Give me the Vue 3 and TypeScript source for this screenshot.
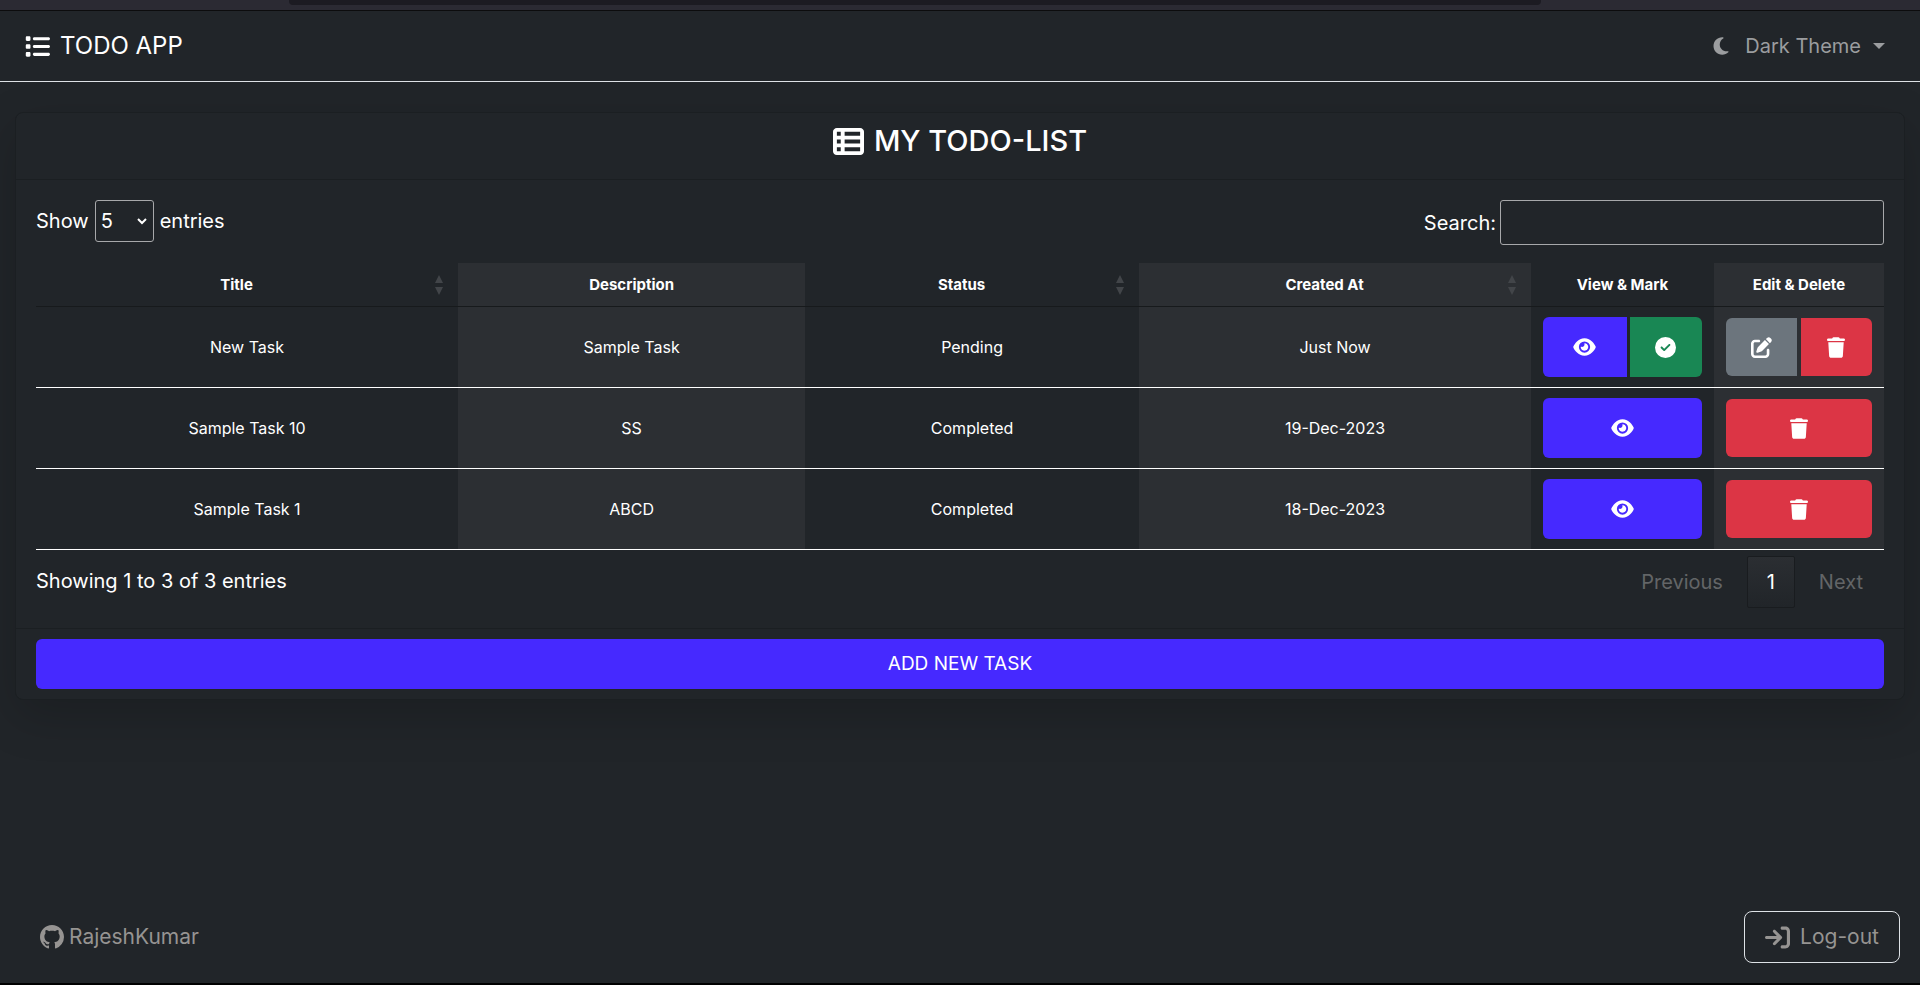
<script setup lang="ts">
import { computed, ref } from 'vue'

interface Task {
  id: number
  title: string
  description: string
  status: 'Pending' | 'Completed'
  createdAt: string
}

type SortKey = 'title' | 'status' | 'createdAt'

interface Column {
  label: string
  key?: SortKey
}

const columns: Column[] = [
  { label: 'Title', key: 'title' },
  { label: 'Description' },
  { label: 'Status', key: 'status' },
  { label: 'Created At', key: 'createdAt' },
  { label: 'View & Mark' },
  { label: 'Edit & Delete' },
]

const tasks = ref<Task[]>([
  { id: 3, title: 'New Task', description: 'Sample Task', status: 'Pending', createdAt: 'Just Now' },
  { id: 2, title: 'Sample Task 10', description: 'SS', status: 'Completed', createdAt: '19-Dec-2023' },
  { id: 1, title: 'Sample Task 1', description: 'ABCD', status: 'Completed', createdAt: '18-Dec-2023' },
])

const pageSize = ref(5)
const search = ref('')
const sortKey = ref<SortKey | null>(null)

const visibleTasks = computed(() => {
  const term = search.value.trim().toLowerCase()
  const found = tasks.value.filter((t) => `${t.title} ${t.description} ${t.status}`.toLowerCase().includes(term))
  const key = sortKey.value
  if (key) found.sort((a, b) => a[key].localeCompare(b[key]))
  return found.slice(0, pageSize.value)
})

const summary = computed(() => {
  const n = visibleTasks.value.length
  return `Showing ${n ? 1 : 0} to ${n} of ${tasks.value.length} entries`
})

function complete(task: Task) {
  task.status = 'Completed'
}

function remove(id: number) {
  tasks.value = tasks.value.filter((t) => t.id !== id)
}
</script>

<template>
  <div class="page">
    <div class="chrome"><div class="chrome-field"></div></div>

    <header class="navbar">
      <a class="brand" href="#">
        <svg class="icon-lg" viewBox="0 0 512 512" aria-hidden="true">
          <path d="M40 48C26.7 48 16 58.7 16 72v48c0 13.3 10.7 24 24 24H88c13.3 0 24-10.7 24-24V72c0-13.3-10.7-24-24-24H40zM192 64c-17.7 0-32 14.3-32 32s14.3 32 32 32H480c17.7 0 32-14.3 32-32s-14.3-32-32-32H192zm0 160c-17.7 0-32 14.3-32 32s14.3 32 32 32H480c17.7 0 32-14.3 32-32s-14.3-32-32-32H192zm0 160c-17.7 0-32 14.3-32 32s14.3 32 32 32H480c17.7 0 32-14.3 32-32s-14.3-32-32-32H192zM16 232v48c0 13.3 10.7 24 24 24H88c13.3 0 24-10.7 24-24V232c0-13.3-10.7-24-24-24H40c-13.3 0-24 10.7-24 24zM40 368c-13.3 0-24 10.7-24 24v48c0 13.3 10.7 24 24 24H88c13.3 0 24-10.7 24-24V392c0-13.3-10.7-24-24-24H40z" />
        </svg>
        TODO APP
      </a>
      <button class="theme" type="button">
        <svg class="moon" viewBox="0 0 384 512" aria-hidden="true">
          <path d="M223.5 32C100 32 0 132.3 0 256S100 480 223.5 480c60.6 0 115.5-24.2 155.8-63.4c5-4.9 6.3-12.5 3.1-18.7s-10.1-9.7-17-8.5c-9.8 1.7-19.8 2.6-30.1 2.6c-96.9 0-175.5-78.8-175.5-176c0-65.8 36-123.1 89.3-153.3c6.1-3.5 9.2-10.5 7.7-17.3s-7.3-11.9-14.3-12.5c-6.3-.5-12.6-.8-19-.8z" />
        </svg>
        Dark Theme
        <span class="caret"></span>
      </button>
    </header>

    <main class="card">
      <div class="card-head">
        <h1>
          <svg class="icon-xl" viewBox="0 0 512 512" aria-hidden="true">
            <path d="M0 96C0 60.7 28.7 32 64 32H448c35.3 0 64 28.7 64 64V416c0 35.3-28.7 64-64 64H64c-35.3 0-64-28.7-64-64V96zm64 0v64h64V96H64zm384 0H192v64H448V96zM64 224v64h64V224H64zm384 0H192v64H448V224zM64 352v64h64V352H64zm384 0H192v64H448V352z" />
          </svg>
          MY TODO-LIST
        </h1>
      </div>

      <div class="card-body">
        <div class="tools">
          <div class="length">
            <label for="page-size">Show</label>
            <span class="select">
              <select id="page-size" v-model.number="pageSize">
                <option :value="5">5</option>
                <option :value="10">10</option>
                <option :value="25">25</option>
              </select>
              <svg viewBox="0 0 12 8" aria-hidden="true"><path d="M2 2l4 4 4-4" /></svg>
            </span>
            <span>entries</span>
          </div>
          <div class="search">
            <label for="search">Search:</label>
            <input id="search" v-model="search" type="search" />
          </div>
        </div>

        <table>
          <colgroup>
            <col class="c-title" />
            <col class="c-desc" />
            <col class="c-status" />
            <col class="c-created" />
            <col class="c-view" />
            <col class="c-edit" />
          </colgroup>
          <thead>
            <tr>
              <th v-for="col in columns" :key="col.label" scope="col">
                <button v-if="col.key" class="sort" type="button" @click="sortKey = col.key">
                  <span>{{ col.label }}</span>
                  <svg viewBox="0 0 8 20" aria-hidden="true"><path d="M0 8L4 0L8 8zM0 12L4 20L8 12z" /></svg>
                </button>
                <template v-else>{{ col.label }}</template>
              </th>
            </tr>
          </thead>
          <tbody>
            <tr v-for="task in visibleTasks" :key="task.id">
              <td>{{ task.title }}</td>
              <td>{{ task.description }}</td>
              <td>{{ task.status }}</td>
              <td>{{ task.createdAt }}</td>
              <td>
                <div class="group view-group">
                  <button class="view" type="button" aria-label="View task">
                    <svg class="eye" viewBox="0 0 576 512" aria-hidden="true">
                      <path d="M288 32c-80.8 0-145.5 36.8-192.6 80.6C48.6 156 17.3 208 2.5 243.7c-3.3 7.9-3.3 16.7 0 24.6C17.3 304 48.6 356 95.4 399.4C142.5 443.2 207.2 480 288 480s145.5-36.8 192.6-80.6c46.8-43.5 78.1-95.4 93-131.1c3.3-7.9 3.3-16.7 0-24.6c-14.9-35.7-46.2-87.7-93-131.1C433.5 68.8 368.8 32 288 32zM144 256a144 144 0 1 1 288 0 144 144 0 1 1 -288 0zm144-64c0 35.3-28.7 64-64 64c-7.1 0-13.9-1.2-20.3-3.3c-5.5-1.8-11.9 1.6-11.7 7.4c.3 6.9 1.3 13.8 3.2 20.7c13.7 51.2 66.4 81.6 117.6 67.9s81.6-66.4 67.9-117.6c-11.1-41.5-47.8-69.4-88.6-71.1c-5.8-.2-9.2 6.1-7.4 11.7c2.1 6.4 3.3 13.2 3.3 20.3z" />
                    </svg>
                  </button>
                  <button v-if="task.status === 'Pending'" class="done" type="button" aria-label="Mark as completed" @click="complete(task)">
                    <svg class="check" viewBox="0 0 512 512" aria-hidden="true">
                      <path d="M256 512A256 256 0 1 0 256 0a256 256 0 1 0 0 512zM369 209L241 337c-9.4 9.4-24.6 9.4-33.9 0l-64-64c-9.4-9.4-9.4-24.6 0-33.9s24.6-9.4 33.9 0l47 47L335 175c9.4-9.4 24.6-9.4 33.9 0s9.4 24.6 0 33.9z" />
                    </svg>
                  </button>
                </div>
              </td>
              <td>
                <div class="group edit-group">
                  <button v-if="task.status === 'Pending'" class="edit" type="button" aria-label="Edit task">
                    <svg class="pen" viewBox="0 0 512 512" aria-hidden="true">
                      <path d="M471.6 21.7c-21.9-21.9-57.3-21.9-79.2 0L362.3 51.7l97.9 97.9 30.1-30.1c21.9-21.9 21.9-57.3 0-79.2L471.6 21.7zm-299.2 220c-6.1 6.1-10.8 13.6-13.5 21.9l-29.6 88.8c-2.9 8.6-.6 18.1 5.8 24.6s15.9 8.7 24.6 5.8l88.8-29.6c8.2-2.7 15.7-7.4 21.9-13.5L437.7 172.3 339.7 74.3 172.4 241.7zM96 64C43 64 0 107 0 160V416c0 53 43 96 96 96H352c53 0 96-43 96-96V320c0-17.7-14.3-32-32-32s-32 14.3-32 32v96c0 17.7-14.3 32-32 32H96c-17.7 0-32-14.3-32-32V160c0-17.7 14.3-32 32-32h96c17.7 0 32-14.3 32-32s-14.3-32-32-32H96z" />
                    </svg>
                  </button>
                  <button class="delete" type="button" aria-label="Delete task" @click="remove(task.id)">
                    <svg class="trash" viewBox="0 0 448 512" aria-hidden="true">
                      <path d="M135.2 17.7L128 32H32C14.3 32 0 46.3 0 64S14.3 96 32 96H416c17.7 0 32-14.3 32-32s-14.3-32-32-32H320l-7.2-14.3C307.4 6.8 296.3 0 284.2 0H163.8c-12.1 0-23.2 6.8-28.6 17.7zM416 128H32L53.2 467c1.6 25.3 22.6 45 47.9 45H346.9c25.3 0 46.3-19.7 47.9-45L416 128z" />
                    </svg>
                  </button>
                </div>
              </td>
            </tr>
          </tbody>
        </table>

        <div class="table-foot">
          <p>{{ summary }}</p>
          <nav class="pager" aria-label="Pages">
            <button type="button" disabled>Previous</button>
            <button class="current" type="button" aria-current="page">1</button>
            <button type="button" disabled>Next</button>
          </nav>
        </div>
      </div>

      <div class="card-foot">
        <button class="add" type="button">ADD NEW TASK</button>
      </div>
    </main>

    <footer class="footer">
      <a class="author" href="#">
        <svg viewBox="0 0 16 16" aria-hidden="true">
          <path d="M8 0C3.58 0 0 3.58 0 8c0 3.54 2.29 6.53 5.47 7.59.4.07.55-.17.55-.38 0-.19-.01-.82-.01-1.49-2.01.37-2.53-.49-2.69-.94-.09-.23-.48-.94-.82-1.13-.28-.15-.68-.52-.01-.53.63-.01 1.08.58 1.23.82.72 1.21 1.87.87 2.33.66.07-.52.28-.87.51-1.07-1.78-.2-3.64-.89-3.64-3.95 0-.87.31-1.59.82-2.15-.08-.2-.36-1.02.08-2.12 0 0 .67-.21 2.2.82.64-.18 1.32-.27 2-.27s1.36.09 2 .27c1.53-1.04 2.2-.82 2.2-.82.44 1.1.16 1.92.08 2.12.51.56.82 1.27.82 2.15 0 3.07-1.87 3.75-3.65 3.95.29.25.54.73.54 1.48 0 1.07-.01 1.93-.01 2.2 0 .21.15.46.55.38A8.01 8.01 0 0 0 16 8c0-4.42-3.58-8-8-8z" />
        </svg>
        RajeshKumar
      </a>
      <button class="logout" type="button">
        <svg class="icon-lg" viewBox="0 0 512 512" aria-hidden="true">
          <path d="M352 96l64 0c17.7 0 32 14.3 32 32l0 256c0 17.7-14.3 32-32 32l-64 0c-17.7 0-32 14.3-32 32s14.3 32 32 32l64 0c53 0 96-43 96-96l0-256c0-53-43-96-96-96l-64 0c-17.7 0-32 14.3-32 32s14.3 32 32 32zm-9.4 182.6c12.5-12.5 12.5-32.8 0-45.3l-128-128c-12.5-12.5-32.8-12.5-45.3 0s-12.5 32.8 0 45.3L242.7 224 32 224c-17.7 0-32 14.3-32 32s14.3 32 32 32l210.7 0-73.4 73.4c-12.5 12.5-12.5 32.8 0 45.3s32.8 12.5 45.3 0l128-128z" />
        </svg>
        Log-out
      </button>
    </footer>
  </div>
</template>

<style>
body {
  margin: 0;
  background: #212529;
}
</style>

<style scoped>
* {
  box-sizing: border-box;
}

.page {
  display: flex;
  flex-direction: column;
  min-height: 100vh;
  border-bottom: 2px solid #000;
  background: #212529;
  color: #fff;
  font: 20px/30px Inter, "Open Sans", sans-serif;
}

button,
input,
select {
  font: inherit;
  color: inherit;
}

button {
  margin: 0;
  padding: 0;
  border: 0;
  background: none;
  cursor: pointer;
}

svg {
  display: block;
  flex: none;
  fill: currentColor;
}

.icon-lg {
  width: 25px;
  height: 25px;
}

.icon-xl {
  width: 31px;
  height: 31px;
}

.chrome {
  height: 11px;
  padding: 0 379px 0 289px;
  border-bottom: 1px solid #0c0c0d;
  background: #2b2a33;
}

.chrome-field {
  height: 5px;
  border-radius: 0 0 4px 4px;
  background: #1c1b22;
}

.navbar {
  display: flex;
  align-items: center;
  justify-content: space-between;
  height: 71px;
  padding: 0 35px 0 25px;
  border-bottom: 1px solid #dee2e6;
}

.brand {
  display: flex;
  align-items: center;
  gap: 10px;
  color: #fff;
  font-size: 24px;
  text-decoration: none;
}

.theme {
  display: flex;
  align-items: center;
  gap: 16px;
  color: #9b9d9f;
}

.moon {
  width: 16px;
  height: 20px;
}

.caret {
  margin-left: -4px;
  border: 6px solid transparent;
  border-top-color: currentColor;
  border-bottom: 0;
}

.card {
  margin: 30px 15px 0;
  border: 1px solid #1b1f22;
  border-radius: 8px;
  background: #212529;
  box-shadow: 0 16px 48px rgba(0, 0, 0, 0.175);
}

.card-head {
  padding: 10px 20px 20px;
  border-bottom: 1px solid #1b1f22;
}

h1 {
  display: flex;
  align-items: center;
  justify-content: center;
  gap: 10px;
  margin: 0;
  font-size: 29px;
  font-weight: 500;
  line-height: 36px;
}

.card-body {
  padding: 20px 20px 20px;
}

.tools {
  display: flex;
  align-items: flex-start;
  justify-content: space-between;
  margin-bottom: 18px;
}

.length,
.search {
  display: flex;
  align-items: center;
  gap: 6px;
}

.select {
  display: grid;
  align-items: center;
  width: 59px;
}

.select select,
.select svg {
  grid-area: 1 / 1;
}

.select select {
  width: 100%;
  height: 42px;
  padding: 0 5px;
  appearance: none;
  border: 1px solid #a7a8aa;
  border-radius: 3px;
  background: #212529;
}

.select svg {
  justify-self: end;
  width: 12px;
  height: 8px;
  margin-right: 6px;
  fill: none;
  stroke: currentColor;
  stroke-width: 2;
  pointer-events: none;
}

.search {
  gap: 4px;
}

.search input {
  width: 384px;
  height: 45px;
  padding: 5px;
  border: 1px solid #a7a8aa;
  border-radius: 3px;
  background: transparent;
  outline: none;
}

table {
  width: 100%;
  table-layout: fixed;
  border-collapse: separate;
  border-spacing: 0;
  font-size: 16px;
  line-height: 22px;
  text-align: center;
}

.c-title {
  width: 22.84%;
}

.c-desc {
  width: 18.78%;
}

.c-status {
  width: 18.07%;
}

.c-created {
  width: 21.21%;
}

.c-view {
  width: 9.9%;
}

.c-edit {
  width: 9.2%;
}

th {
  height: 44px;
  padding: 0 10px;
  border-bottom: 1px solid #171a1c;
  font-size: 15px;
  font-weight: 700;
}

td {
  height: 81px;
  padding: 0 12px;
  border-bottom: 1px solid #fff;
}

th:nth-child(even),
td:nth-child(even) {
  background: #2c2f33;
}

.sort {
  display: flex;
  align-items: center;
  gap: 8px;
  width: 100%;
}

.sort span {
  flex: 1;
}

.sort svg {
  width: 8px;
  height: 20px;
  margin-right: 5px;
  fill: #424549;
}

.group {
  display: flex;
  overflow: hidden;
  border-radius: 6px;
}

.group button {
  display: flex;
  flex: 1;
  align-items: center;
  justify-content: center;
}

.view-group {
  gap: 3px;
  height: 60px;
}

.edit-group {
  gap: 4px;
  height: 58px;
}

.group .view {
  flex-grow: 83;
  background: #4629ff;
}

.group .done {
  flex-grow: 72;
  background: #198754;
}

.edit {
  background: #6c757d;
}

.delete {
  background: #dc3545;
}

.eye {
  width: 23px;
  height: 20px;
}

.check,
.pen {
  width: 21px;
  height: 21px;
}

.trash {
  width: 18px;
  height: 21px;
}

.table-foot {
  display: flex;
  align-items: flex-start;
  justify-content: space-between;
  padding-top: 6px;
}

.table-foot p {
  margin: 10px 0;
}

.pager {
  display: flex;
  gap: 3px;
}

.pager button {
  padding: 10px 20px;
  border: 1px solid transparent;
  border-radius: 2px;
  color: #636567;
}

.pager .current {
  min-width: 48px;
  padding: 10px 16px;
  border-color: #191c1f;
  background: linear-gradient(#2b2e32, #212529);
  color: #fff;
}

.card-foot {
  padding: 10px 20px;
  border-top: 1px solid #1b1f22;
}

.add {
  width: 100%;
  height: 50px;
  border-radius: 6px;
  background: #4629ff;
  font-size: 19px;
}

.footer {
  display: flex;
  align-items: center;
  justify-content: space-between;
  margin-top: auto;
  padding: 20px;
  color: #969492;
  font-size: 21px;
}

.author {
  display: flex;
  align-items: center;
  gap: 5px;
  padding: 0 20px;
  color: inherit;
  text-decoration: none;
}

.author svg {
  width: 24px;
  height: 24px;
}

.logout {
  display: flex;
  align-items: center;
  gap: 10px;
  padding: 10px 20px;
  border: 1px solid #dee2e6;
  border-radius: 8px;
}
</style>
